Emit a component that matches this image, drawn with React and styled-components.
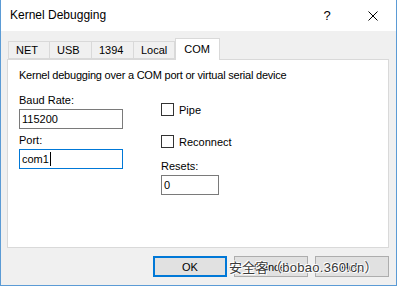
import React from "react";
import styled, { createGlobalStyle } from "styled-components";

const Global = createGlobalStyle`
  html, body { margin: 0; padding: 0; background: #ffffff; }
  body { font-family: "Liberation Sans", Arial, sans-serif; }
`;

const Window = styled.div`
  position: relative;
  box-sizing: border-box;
  width: 397px;
  height: 286px;
  border: 1px solid #5b9bd5;
  border-top: none;
  background: #f0f0f0;
  display: flex;
  flex-direction: column;
`;

const TitleBar = styled.div`
  height: 31px;
  background: #ffffff;
  display: flex;
  align-items: center;
  padding-left: 9px;
  font-size: 12px;
  color: #000;
`;

const Title = styled.div`
  flex: 1;
  margin-top: -1px;
`;

const TitleButton = styled.div`
  width: 46px;
  height: 31px;
  display: flex;
  align-items: center;
  justify-content: center;
  font-size: 13px;
  color: #000;
`;

const Body = styled.div`
  flex: 1;
  padding: 7px 7px 9px 6px;
  display: flex;
  flex-direction: column;
`;

const TabRow = styled.div`
  display: flex;
  align-items: flex-end;
  height: 21px;
  padding-left: 1px;
  position: relative;
  z-index: 1;
`;

const Tab = styled.div`
  box-sizing: border-box;
  height: ${(p) => (p.$active ? "22px" : "18px")};
  margin-bottom: ${(p) => (p.$active ? "-1px" : "0")};
  padding: ${(p) => (p.$active ? "3px 8px 0 8px" : "1px 7px 0 7px")};
  min-width: ${(p) => p.$w}px;
  border: 1px solid #d9d9d9;
  border-bottom: ${(p) => (p.$active ? "none" : "1px solid #d9d9d9")};
  border-left: ${(p) => (p.$first || p.$active ? "1px solid #d9d9d9" : "none")};
  background: ${(p) => (p.$active ? "#ffffff" : "#f0f0f0")};
  font-size: 11px;
  line-height: 14px;
  color: #000;
`;

const Panel = styled.div`
  box-sizing: border-box;
  height: 189px;
  background: #ffffff;
  border: 1px solid #d9d9d9;
  padding: 8px 11px 0 11px;
  font-size: 11px;
  color: #000;
`;

const Desc = styled.div`
  line-height: 14px;
  letter-spacing: -0.22px;
`;

const Columns = styled.div`
  display: flex;
  gap: 38px;
  margin-top: 11px;
`;

const Column = styled.div`
  display: flex;
  flex-direction: column;
  width: ${(p) => p.$w}px;
  margin-top: ${(p) => p.$top || 0}px;
`;

const Label = styled.div`
  line-height: 14px;
  margin-top: ${(p) => p.$top || 0}px;
  margin-bottom: 2px;
`;

const Field = styled.div`
  box-sizing: border-box;
  width: ${(p) => p.$w}px;
  height: 20px;
  border: 1px solid ${(p) => (p.$focus ? "#0078d7" : "#7a7a7a")};
  background: #fff;
  padding: 2px 0 0 2px;
  line-height: 14px;
  display: flex;
  align-items: flex-start;
`;

const Caret = styled.span`
  display: inline-block;
  width: 1px;
  height: 14px;
  background: #000;
  margin-left: 1px;
`;

const CheckRow = styled.div`
  display: flex;
  align-items: center;
  gap: 5px;
  height: 13px;
  margin-bottom: ${(p) => p.$mb || 0}px;
`;

const Box = styled.div`
  box-sizing: border-box;
  width: 13px;
  height: 13px;
  border: 1px solid #333;
  background: #fff;
`;

const Buttons = styled.div`
  display: flex;
  justify-content: flex-end;
  gap: 7px;
  margin-top: 8px;
`;

const Button = styled.div`
  box-sizing: border-box;
  width: 74px;
  height: 21px;
  background: #e1e1e1;
  border: ${(p) => (p.$default ? "2px solid #0078d7" : "1px solid #adadad")};
  display: flex;
  align-items: center;
  justify-content: center;
  font-size: 11px;
  color: #000;
`;

const Watermark = styled.div`
  position: absolute;
  left: 228px;
  top: 257px;
  font-family: "Liberation Sans", "Noto Sans CJK SC", sans-serif;
  font-size: 13px;
  letter-spacing: 0.3px;
  color: #3a3a3a;
  text-shadow: 0 0 2px #fff, 0 0 2px #fff, 1px 1px 0 #fff, -1px -1px 0 #fff;
  white-space: nowrap;
`;

const tabs = [
  { name: "NET", w: 42 },
  { name: "USB", w: 42 },
  { name: "1394", w: 42 },
  { name: "Local", w: 41 },
];

export default function App() {
  return (
    <>
      <Global />
      <Window>
        <TitleBar>
          <Title>Kernel Debugging</Title>
          <TitleButton>?</TitleButton>
          <TitleButton>
            <svg width="10" height="10" viewBox="0 0 10 10">
              <path d="M0.5 0.5 L9.5 9.5 M9.5 0.5 L0.5 9.5" stroke="#000" strokeWidth="1" fill="none" />
            </svg>
          </TitleButton>
        </TitleBar>
        <Body>
          <TabRow>
            {tabs.map((t, i) => (
              <Tab key={t.name} $w={t.w} $first={i === 0}>
                {t.name}
              </Tab>
            ))}
            <Tab $active $w={45}>COM</Tab>
          </TabRow>
          <Panel>
            <Desc>Kernel debugging over a COM port or virtual serial device</Desc>
            <Columns>
              <Column $w={104}>
                <Label>Baud Rate:</Label>
                <Field $w={104}>115200</Field>
                <Label $top={4}>Port:</Label>
                <Field $w={104} $focus>
                  com1<Caret />
                </Field>
              </Column>
              <Column $w={120} $top={10}>
                <CheckRow $mb={19}>
                  <Box />
                  Pipe
                </CheckRow>
                <CheckRow $mb={11}>
                  <Box />
                  Reconnect
                </CheckRow>
                <Label>Resets:</Label>
                <Field $w={58}>0</Field>
              </Column>
            </Columns>
          </Panel>
          <Buttons>
            <Button $default>OK</Button>
            <Button>Cancel</Button>
            <Button>Help</Button>
          </Buttons>
        </Body>
        <Watermark>安全客（bobao.360.cn）</Watermark>
      </Window>
    </>
  );
}
